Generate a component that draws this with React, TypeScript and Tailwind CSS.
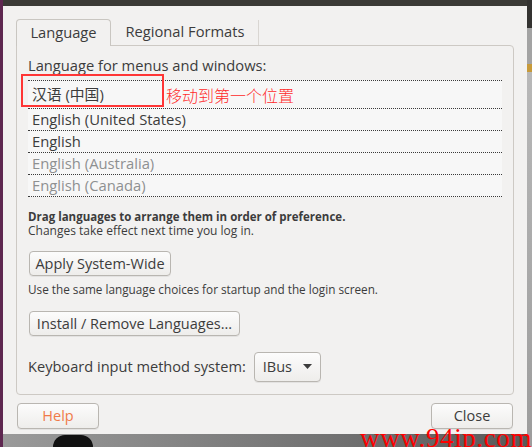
import React from "react";

const btn =
  "flex items-center justify-center border border-[#b9b6b1] rounded-[4px] bg-gradient-to-b from-[#fcfcfc] to-[#eeedeb] shadow-[0_1px_0_rgba(0,0,0,0.06)] text-[14.5px] text-[#3c3c3c]";

export default function App() {
  return (
    <div className="relative flex w-[532px] h-[447px] overflow-hidden bg-[#2c2c2c] font-['Open_Sans','Noto_Sans_CJK_SC',sans-serif] text-[#3c3c3c]">
      {/* purple desktop edge */}
      <div className="w-[3px] h-full bg-[#5e2750]" />

      <div className="flex flex-col w-[524px] h-full">
        {/* title bar (cropped) */}
        <div className="h-[6px] bg-[#3b3a36]" />

        {/* window body */}
        <div className="h-[436px] bg-[#f2f1f0] flex flex-col px-[13px] pt-[13px]">
          {/* tabs */}
          <div className="flex h-[26px] relative z-10">
            <div className="w-[95px] h-[27px] border border-b-0 border-[#c9c6c1] rounded-t-[4px] bg-[#f2f1f0] flex items-center justify-center text-[14.7px] pb-[2px]">
              Language
            </div>
            <div className="w-[148px] h-[26px] flex items-center justify-center text-[14.7px] pb-[1px] relative">
              Regional Formats
              <div className="absolute right-0 top-[1px] bottom-0 w-px bg-[#d9d6d2]" />
            </div>
          </div>

          {/* panel */}
          <div className="h-[350px] border border-[#cdc9c4] rounded-[4px] rounded-tl-none flex flex-col px-[11px]">
            <div className="mt-[10px] leading-[18px] text-[14.7px]">
              Language for menus and windows:
            </div>

            <div className="mt-[6px] border-t border-dotted border-[#3a3a3a] bg-[#f7f7f7] relative text-[14.8px]">
              <div className="h-[28px] border-b border-dotted border-[#3a3a3a] flex items-center pl-[4px] relative">
                汉语 (中国)
                <span className="absolute left-[138px] top-[4px] text-[16px] leading-[20px] text-[#ff2a2a] font-['Noto_Sans_CJK_SC',sans-serif] font-light">
                  移动到第一个位置
                </span>
              </div>
              <div className="h-[22px] border-b border-dotted border-[#3a3a3a] flex items-center pl-[4px]">
                English (United States)
              </div>
              <div className="h-[22px] border-b border-dotted border-[#3a3a3a] flex items-center pl-[4px]">
                English
              </div>
              <div className="h-[22px] border-b border-dotted border-[#3a3a3a] flex items-center pl-[4px] text-[#8e9091]">
                English (Australia)
              </div>
              <div className="h-[22px] border-b border-dotted border-[#3a3a3a] flex items-center pl-[4px] text-[#8e9091]">
                English (Canada)
              </div>
              {/* red annotation frame */}
              <div className="absolute left-[-7px] top-[-7px] w-[143px] h-[33px] border-2 border-[#ff3535]" />
            </div>

            <div className="mt-[12px] text-[11.5px] leading-[15px] font-bold">
              Drag languages to arrange them in order of preference.
            </div>
            <div className="text-[12px] leading-[14px]">
              Changes take effect next time you log in.
            </div>

            <div className={`${btn} mt-[13px] w-[142px] h-[25px] ml-[1px]`}>
              Apply System-Wide
            </div>

            <div className="mt-[6px] text-[11.75px] leading-[15px]">
              Use the same language choices for startup and the login screen.
            </div>

            <div className={`${btn} mt-[14px] w-[211px] h-[25px] ml-[1px]`}>
              Install / Remove Languages...
            </div>

            <div className="mt-[16px] flex items-center h-[30px]">
              <span className="text-[14.6px]">Keyboard input method system:</span>
              <div className={`${btn} ml-[8px] w-[67px] h-[30px] justify-start pl-[8px] gap-[11px]`}>
                <span>IBus</span>
                <svg width="9" height="5" viewBox="0 0 9 5">
                  <path d="M0 0 L9 0 L4.5 5 Z" fill="#3c3c3c" />
                </svg>
              </div>
            </div>
          </div>

          {/* bottom buttons */}
          <div className="mt-[8px] flex justify-between px-[1px]">
            <div className={`${btn} w-[82px] h-[26px] text-[#f07a4a]`}>Help</div>
            <div className={`${btn} w-[82px] h-[26px]`}>Close</div>
          </div>
        </div>

        {/* desktop below window */}
        <div className="flex-1 bg-gradient-to-r from-[#9a9a9a] via-[#7a7a7a] to-[#5a5a5a] flex">
          <div className="ml-[50px] mt-[1px] w-[40px] h-[12px] rounded-t-full bg-[#111]" />
        </div>
      </div>

      {/* desktop right edge */}
      <div className="flex-1 flex flex-col">
        <div className="h-[28px] bg-[#343331]" />
        <div className="h-[36px] bg-[#a3a3a3]" />
        <div className="h-[8px] bg-[#c79a3a]" />
        <div className="flex-1 bg-gradient-to-b from-[#b8b8b8] to-[#9c9c9c]" />
      </div>

      {/* watermark */}
      <div className="absolute right-[0px] bottom-[-6px] text-[27px] leading-[30px] tracking-[0.6px] text-[#ff0000] font-['Liberation_Serif',serif]">
        www.94ip.com
      </div>
    </div>
  );
}
